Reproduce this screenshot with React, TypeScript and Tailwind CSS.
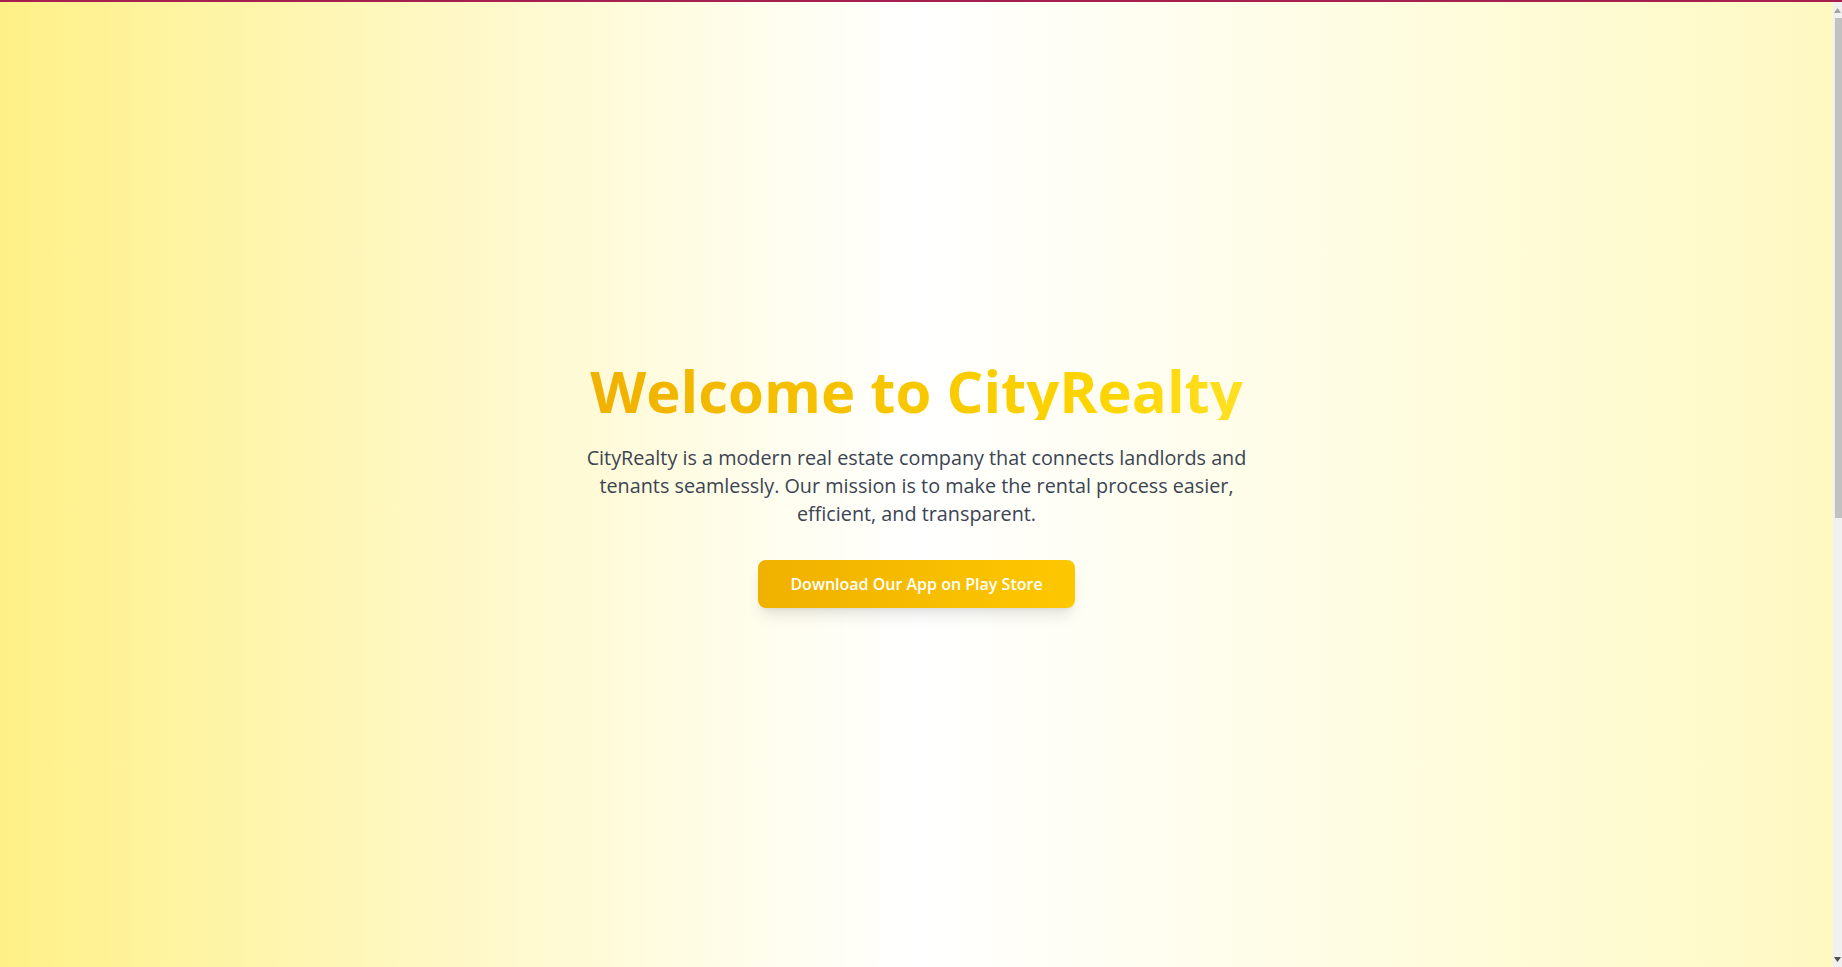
import React from "react";

function FakeScrollbar() {
  return (
    <div className="flex w-[9px] shrink-0 flex-col items-center bg-[#f1f1f1]">
      <svg width="7" height="5" viewBox="0 0 7 5" className="mt-[6px] shrink-0">
        <path d="M0 5 L3.5 0 L7 5 Z" fill="#a3a3a3" />
      </svg>
      <div className="mt-[5px] ml-[2px] h-[500px] w-[7px] shrink-0 bg-[#c1c1c1]" />
      <div className="flex-1" />
      <svg width="7" height="5" viewBox="0 0 7 5" className="mb-[5px] shrink-0">
        <path d="M0 0 L7 0 L3.5 5 Z" fill="#505050" />
      </svg>
    </div>
  );
}

export default function App() {
  return (
    <div
      className="flex h-screen w-full flex-col overflow-hidden"
      style={{ fontFamily: '"Open Sans", "Noto Sans", sans-serif' }}
    >
      <div className="h-[2px] w-full shrink-0 bg-[#a51f4f]" />
      <div className="flex min-h-0 flex-1">
        <main className="min-w-0 flex-1 overflow-hidden bg-gradient-to-r from-yellow-200 via-white to-yellow-100">
          <section className="flex h-[965px] flex-col items-center justify-center px-6 text-center">
            <h1 className="mb-6 bg-gradient-to-r from-yellow-500 to-yellow-300 bg-clip-text text-[58px] leading-none font-bold text-transparent">
              Welcome to CityRealty
            </h1>
            <p className="max-w-2xl text-[19.8px] leading-7 font-medium text-[#3b4452]">
              CityRealty is a modern real estate company that connects landlords and
              tenants seamlessly. Our mission is to make the rental process easier,
              efficient, and transparent.
            </p>
            <button className="mt-8 rounded-lg bg-gradient-to-r from-yellow-500 to-yellow-400 px-8 py-3 text-base leading-6 font-semibold text-white shadow-lg">
              Download Our App on Play Store
            </button>
          </section>
        </main>
        <FakeScrollbar />
      </div>
    </div>
  );
}
